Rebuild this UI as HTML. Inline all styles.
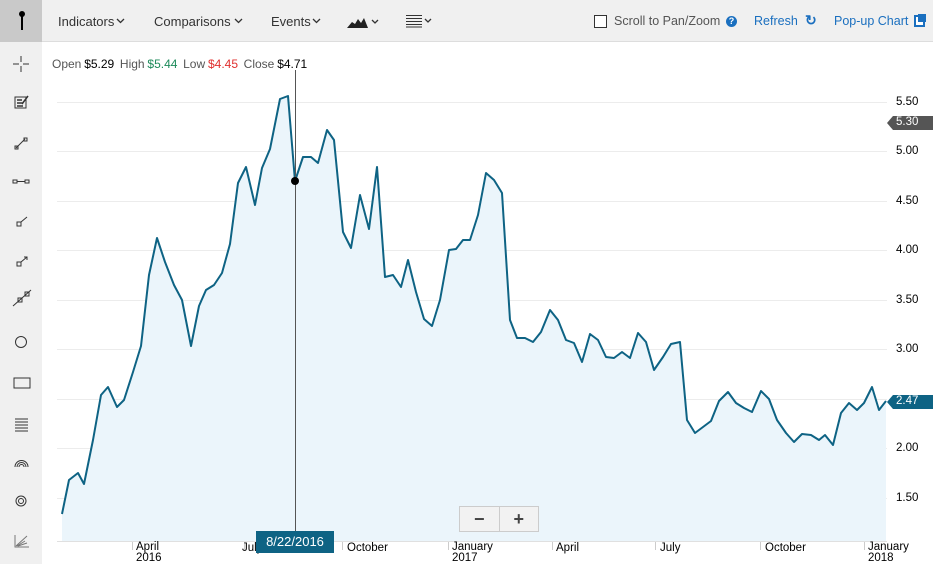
<!DOCTYPE html>
<html><head><meta charset="utf-8">
<style>
*{margin:0;padding:0;box-sizing:border-box}
body{width:933px;height:564px;background:#fff;font-family:"Liberation Sans",Arial,sans-serif;position:relative;overflow:hidden}
.top{position:absolute;left:0;top:0;width:933px;height:42px;background:#f0f0f0;border-bottom:1px solid #ddd}
.side{position:absolute;left:0;top:42px;width:42px;height:522px;background:#f0f0f0}
.t{position:absolute;top:14px;font-size:13px;color:#333}
.b{color:#1a6fbf}
.ax{position:absolute;font-size:11.5px;color:#000}
.ohlc{position:absolute;left:52px;top:57px;font-size:12px;color:#555;word-spacing:-0.5px}
.ohlc span{color:#000}
.chev{position:absolute;top:18px}
</style></head><body>
<div class="top">
 <div style="position:absolute;left:0;top:0;width:42px;height:42px;background:#c9c9c9"></div>
 <div style="position:absolute;left:19px;top:11px;width:6px;height:6px;border-radius:50%;background:#000"></div>
 <div style="position:absolute;left:21px;top:14px;width:1.5px;height:16px;background:#000"></div>
 <div class="t" style="left:58px">Indicators</div>
 <svg class="chev" style="left:116px" width="9" height="6"><path d="M1 1L4.5 4.5L8 1" stroke="#333" fill="none" stroke-width="1.3"/></svg>
 <div class="t" style="left:154px">Comparisons</div>
 <svg class="chev" style="left:234px" width="9" height="6"><path d="M1 1L4.5 4.5L8 1" stroke="#333" fill="none" stroke-width="1.3"/></svg>
 <div class="t" style="left:271px">Events</div>
 <svg class="chev" style="left:312px" width="9" height="6"><path d="M1 1L4.5 4.5L8 1" stroke="#333" fill="none" stroke-width="1.3"/></svg>
 <svg style="position:absolute;left:347px;top:15px" width="34" height="14"><path d="M0 13 L5 7 L8 9 L11 4 L14 8 L17 3 L21 13Z" fill="#222"/><path d="M25 5 L28 8 L31 5" stroke="#333" fill="none" stroke-width="1.3"/></svg>
 <svg style="position:absolute;left:406px;top:14px" width="30" height="14"><g stroke="#333" stroke-width="1"><path d="M0 1.5H16M0 4.5H16M0 7.5H16M0 10.5H16M0 13H16"/></g><path d="M19 5 L22 8 L25 5" stroke="#333" fill="none" stroke-width="1.3"/></svg>
 <div style="position:absolute;left:594px;top:15px;width:13px;height:13px;border:1px solid #333;background:#fff"></div>
 <div class="t" style="left:614px;color:#555;font-size:12.5px">Scroll to Pan/Zoom</div>
 <div style="position:absolute;left:726px;top:16px;width:11px;height:11px;border-radius:50%;background:#1a6fbf;color:#fff;font-size:9px;font-weight:bold;text-align:center;line-height:11px">?</div>
 <div class="t b" style="left:754px;font-size:12.5px">Refresh</div>
 <div style="position:absolute;left:805px;top:12px;font-size:14px;font-weight:bold;color:#1a6fbf">&#8635;</div>
 <div class="t b" style="left:834px;font-size:12.5px">Pop-up Chart</div>
 <div style="position:absolute;left:914px;top:15px;width:11px;height:12px;border:2px solid #1a6fbf;background:#fff"></div>
 <div style="position:absolute;left:918px;top:14px;width:8px;height:8px;background:#1a6fbf"></div>
</div>
<div class="side">
<svg width="42" height="522" fill="none" stroke="#333" stroke-width="1">
 <path d="M13 22H19M23 22H29M21 14V20M21 24V30"/>
 <rect x="15" y="55" width="11" height="11"/><path d="M17 58H22M17 61H23M17 64H23M22 62L28 54" stroke-width="1.5"/>
 <path d="M16 106L25 97"/><rect x="15" y="104" width="3" height="3"/><rect x="24" y="96" width="3" height="3"/>
 <rect x="13" y="138" width="4" height="3"/><rect x="25" y="138" width="4" height="3"/><path d="M17 139.5H25"/>
 <rect x="17" y="180" width="4" height="4"/><path d="M21 180L27 175"/>
 <rect x="17" y="220" width="4" height="4"/><path d="M21 220L27 215M24 215H27V218"/>
 <path d="M13 264L31 248"/><rect x="18" y="256" width="4" height="4"/><rect x="25" y="250" width="4" height="4"/>
 <circle cx="21" cy="300" r="5.5"/>
 <rect x="14" y="336" width="16" height="10"/>
 <path d="M15 377H28M15 380H28M15 383H28M15 386H28M15 389H28"/>
 <path d="M15 425A6 6 0 0 1 28 425M17 425A4 4 0 0 1 26 425M19 425A2 2 0 0 1 24 425"/>
 <circle cx="21" cy="459" r="5"/><circle cx="21" cy="459" r="2.5"/>
 <path d="M15 493V505H29M16 504L27 494M17 504L25 499M18 504L27 501" stroke="#777"/>
</svg>
</div>
<div class="ohlc">Open <span>$5.29</span>&nbsp; High <span style="color:#1d8a5a">$5.44</span>&nbsp; Low <span style="color:#e0302f">$4.45</span>&nbsp; Close <span>$4.71</span></div>
<svg style="position:absolute;left:0;top:0" width="933" height="564">
 <g stroke="#ececec" stroke-width="1">
  <path d="M57 102.5H887M57 151.5H887M57 201.5H887M57 250.5H887M57 300.5H887M57 349.5H887M57 399.5H887M57 448.5H887M57 498.5H887"/>
 </g>
 <path d="M57 541.5H887" stroke="#e0e0e0"/>
 <polygon fill="#ebf5fb" points="62,541 62,514 69,480 78,473 84,484 93,440 101,395 108,387 117,407 124,400 133,372 141,346 149,275 157,238 165,262 174,285 182,300 191,346 199,306 206,290 214,285 222,273 230,244 238,183 246,167 255,205 262,168 270,149 280,99 288,96 295,181 303,157 311,157 318,163 327,130 334,140 343,232 351,248 360,195 369,229 377,167 385,277 393,275 401,287 408,260 416,292 424,319 432,326 440,300 449,250 456,249 463,240 470,240 478,215 486,173 494,180 502,193 510,320 517,338 525,338 533,342 541,332 550,310 558,320 566,340 574,343 582,362 590,334 598,340 606,357 614,358 622,352 630,358 638,333 646,342 654,370 663,357 671,344 680,342 687,420 695,433 703,427 711,421 719,401 728,392 736,403 744,408 752,412 761,391 769,399 777,420 786,433 794,442 802,434 811,435 819,440 825,435 833,445 841,413 849,403 857,410 864,403 872,387 879,410 886,401 886,541"/>
 <polyline fill="none" stroke="#0e6384" stroke-width="2" stroke-linejoin="round" points="62,514 69,480 78,473 84,484 93,440 101,395 108,387 117,407 124,400 133,372 141,346 149,275 157,238 165,262 174,285 182,300 191,346 199,306 206,290 214,285 222,273 230,244 238,183 246,167 255,205 262,168 270,149 280,99 288,96 295,181 303,157 311,157 318,163 327,130 334,140 343,232 351,248 360,195 369,229 377,167 385,277 393,275 401,287 408,260 416,292 424,319 432,326 440,300 449,250 456,249 463,240 470,240 478,215 486,173 494,180 502,193 510,320 517,338 525,338 533,342 541,332 550,310 558,320 566,340 574,343 582,362 590,334 598,340 606,357 614,358 622,352 630,358 638,333 646,342 654,370 663,357 671,344 680,342 687,420 695,433 703,427 711,421 719,401 728,392 736,403 744,408 752,412 761,391 769,399 777,420 786,433 794,442 802,434 811,435 819,440 825,435 833,445 841,413 849,403 857,410 864,403 872,387 879,410 886,401"/>
 <path d="M295.5 70V541" stroke="#555"/>
 <circle cx="295" cy="181" r="4" fill="#000"/>
 <g stroke="#ccc"><path d="M132.5 542V550M244.5 542V550M342.5 542V550M448.5 542V550M552.5 542V550M655.5 542V550M760.5 542V550M864.5 542V550"/></g>
 <polygon points="887,123 893,116 933,116 933,130 893,130" fill="#555"/>
 <polygon points="887,402 893,395 933,395 933,409 893,409" fill="#0e6384"/>
</svg>
<div class="ax" style="left:896px;top:96px">5.50</div>
<div class="ax" style="left:896px;top:116px;color:#fff">5.30</div>
<div class="ax" style="left:896px;top:145px">5.00</div>
<div class="ax" style="left:896px;top:195px">4.50</div>
<div class="ax" style="left:896px;top:244px">4.00</div>
<div class="ax" style="left:896px;top:294px">3.50</div>
<div class="ax" style="left:896px;top:343px">3.00</div>
<div class="ax" style="left:896px;top:395px;color:#fff">2.47</div>
<div class="ax" style="left:896px;top:442px">2.00</div>
<div class="ax" style="left:896px;top:492px">1.50</div>
<div class="ax" style="left:136px;top:542px;line-height:11px">April<br>2016</div>
<div class="ax" style="left:242px;top:542px">July</div>
<div class="ax" style="left:347px;top:542px">October</div>
<div class="ax" style="left:452px;top:542px;line-height:11px">January<br>2017</div>
<div class="ax" style="left:556px;top:542px">April</div>
<div class="ax" style="left:660px;top:542px">July</div>
<div class="ax" style="left:765px;top:542px">October</div>
<div class="ax" style="left:868px;top:542px;line-height:11px">January<br>2018</div>
<div style="position:absolute;left:256px;top:531px;width:78px;height:22px;background:#0e6384;color:#fff;font-size:13px;text-align:center;line-height:22px">8/22/2016</div>
<div style="position:absolute;left:459px;top:506px;width:80px;height:26px;border:1px solid #ccc;background:#f2f2f2;display:flex">
 <div style="flex:1;border-right:1px solid #ccc;text-align:center;font-size:18px;font-weight:bold;color:#444;line-height:24px">&minus;</div>
 <div style="flex:1;text-align:center;font-size:18px;font-weight:bold;color:#444;line-height:24px">+</div>
</div>
</body></html>
